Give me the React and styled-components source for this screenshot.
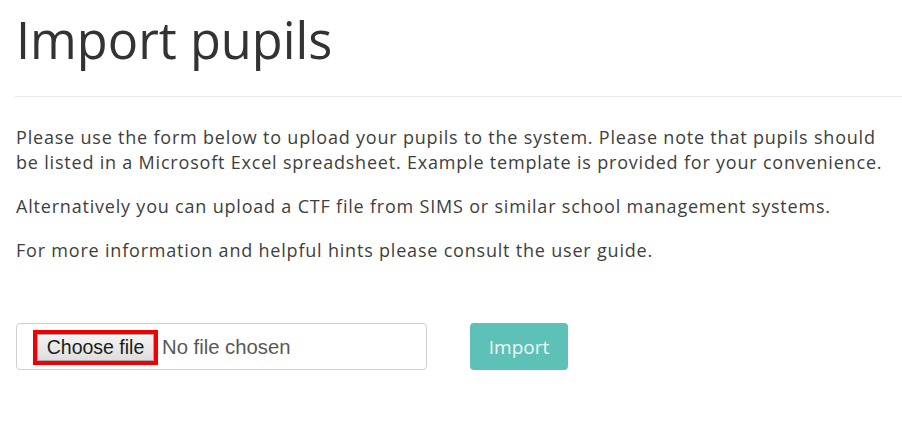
import React, { useState } from "react";
import styled, { createGlobalStyle } from "styled-components";

const GlobalStyle = createGlobalStyle`
  html, body {
    margin: 0;
    padding: 0;
    background: #fff;
  }
  body {
    font-family: "Open Sans", "Noto Sans", sans-serif;
    color: #3b3b3b;
  }
`;

const Page = styled.div`
  padding: 0 15px 0 16px;
`;

const Title = styled.h1`
  margin: 0;
  padding-top: 11px;
  font-size: 50.5px;
  font-weight: 400;
  line-height: 58px;
  color: #333;
`;

const Divider = styled.hr`
  margin: 27px -15px 28px -1px;
  border: none;
  border-top: 1px solid #eaeaea;
`;

const Text = styled.p`
  margin: 0 0 19px;
  font-size: 18px;
  line-height: 25px;
  letter-spacing: 0.8px;
  color: #3e3e3e;
`;

const UploadForm = styled.form`
  display: flex;
  align-items: center;
  gap: 43px;
  margin-top: 60px;
`;

const FileField = styled.label`
  box-sizing: border-box;
  width: 411px;
  height: 47px;
  display: flex;
  align-items: center;
  padding: 2px 0 0 20px;
  border: 1px solid #cfcfcf;
  border-radius: 4px;
  background: #fff;
  cursor: pointer;
  input { display: none; }
`;

const ChooseBtn = styled.span`
  box-sizing: border-box;
  height: 27px;
  width: 117px;
  display: flex;
  align-items: center;
  justify-content: center;
  background: linear-gradient(#f4f4f4, #dedede);
  border: 1px solid #a9a9a9;
  outline: 4px solid #f20000;
  font-family: "Liberation Sans", Arial, sans-serif;
  font-size: 19.5px;
  color: #1b1b1b;
`;

const FileName = styled.span`
  margin-left: 8px;
  font-family: "Liberation Sans", Arial, sans-serif;
  font-size: 20.3px;
  color: #585858;
`;

const ImportBtn = styled.button`
  box-sizing: border-box;
  width: 98px;
  height: 47px;
  border: none;
  border-radius: 4px;
  background: #5dc1b7;
  color: #eefaf8;
  font-family: "Open Sans", sans-serif;
  font-size: 19px;
  cursor: pointer;
`;

export default function App() {
    const [file, setFile] = useState(null);

    const handleChange = (e) => setFile(e.target.files[0] || null);

    return (
        <>
            <GlobalStyle />
            <Page>
                <Title>Import pupils</Title>
                <Divider />
                <Text>
                    Please use the form below to upload your pupils to the system. Please note that pupils should
                    be listed in a Microsoft Excel spreadsheet. Example template is provided for your convenience.
                </Text>
                <Text>Alternatively you can upload a CTF file from SIMS or similar school management systems.</Text>
                <Text>For more information and helpful hints please consult the user guide.</Text>

                <UploadForm onSubmit={(e) => e.preventDefault()}>
                    <FileField>
                        <input type="file" onChange={handleChange} />
                        <ChooseBtn>Choose file</ChooseBtn>
                        <FileName>{file ? file.name : "No file chosen"}</FileName>
                    </FileField>
                    <ImportBtn type="submit">Import</ImportBtn>
                </UploadForm>
            </Page>
        </>
    );
}
